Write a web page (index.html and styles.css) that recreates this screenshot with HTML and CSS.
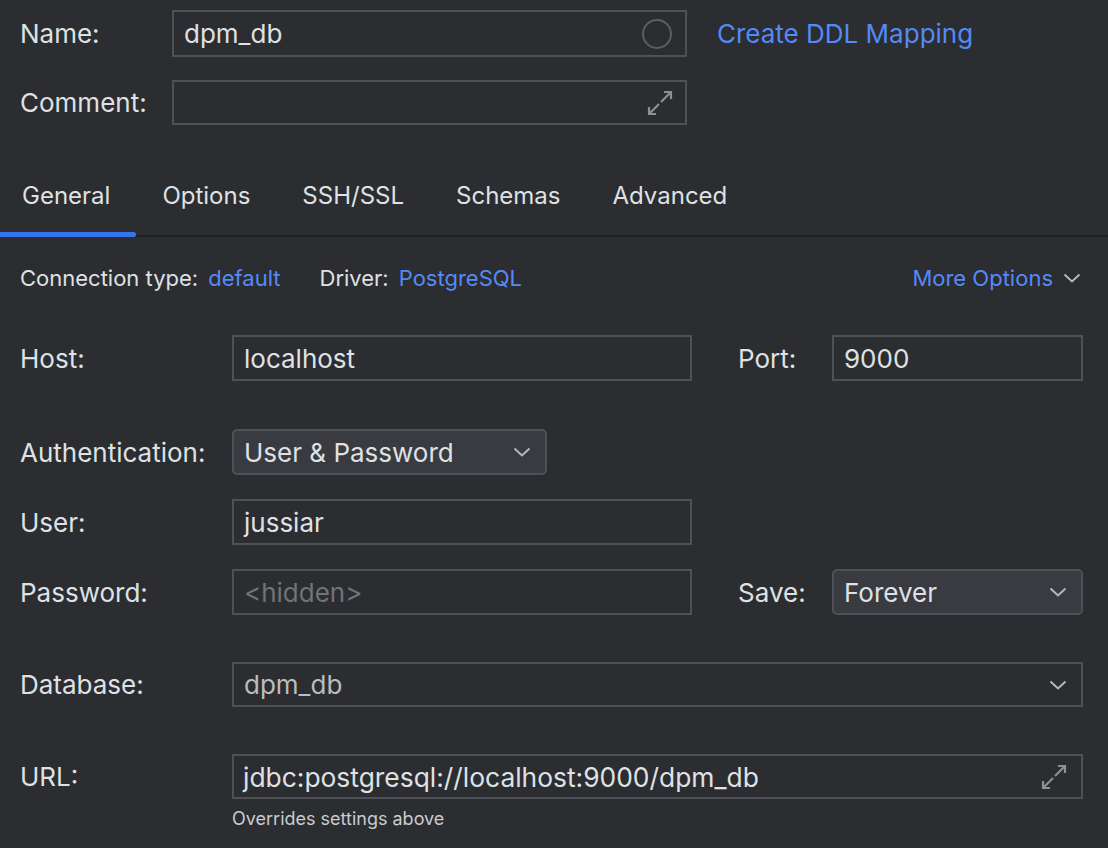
FILE: index.html
```html
<!DOCTYPE html>
<html>
<head>
<meta charset="utf-8">
<link rel="stylesheet" href="styles.css">
</head>
<body>
<div class="page">
  <div class="top">
    <div class="row r-name">
      <span class="lbl lbl-top">Name:</span>
      <div class="field f-name">
        <span class="val">dpm_db</span>
        <svg class="circle" width="32" height="32" viewBox="0 0 32 32"><circle cx="16" cy="16" r="14" fill="none" stroke="#5b5e64" stroke-width="2"/></svg>
      </div>
      <a class="link ddl">Create DDL Mapping</a>
    </div>
    <div class="row r-comment">
      <span class="lbl lbl-top">Comment:</span>
      <div class="field f-name f-comment">
        <svg class="expand" width="26" height="26" viewBox="0 0 26 26"><path d="M14 12 L24 2 M17 2 H24 V9 M12 14 L2 24 M2 17 V24 H9" fill="none" stroke="#8c8f95" stroke-width="2.2"/></svg>
      </div>
    </div>
  </div>

  <div class="tabs">
    <div class="tab active">General</div>
    <div class="tab">Options</div>
    <div class="tab">SSH/SSL</div>
    <div class="tab">Schemas</div>
    <div class="tab">Advanced</div>
  </div>

  <div class="form">
    <div class="conn">
      <span class="ct">Connection type:</span>
      <a class="link sm">default</a>
      <span class="ct drv">Driver:</span>
      <a class="link sm">PostgreSQL</a>
      <span class="spacer"></span>
      <a class="link sm more">More Options</a>
      <svg class="chev-more" width="18" height="10" viewBox="0 0 18 10"><path d="M1.5 1.5 L9 8.5 L16.5 1.5" fill="none" stroke="#b4b8bf" stroke-width="2"/></svg>
    </div>

    <div class="row r-host">
      <span class="lbl">Host:</span>
      <div class="field w-half"><span class="val">localhost</span></div>
      <span class="lbl lbl-side">Port:</span>
      <div class="field w-side"><span class="val">9000</span></div>
    </div>

    <div class="row r-auth">
      <span class="lbl">Authentication:</span>
      <div class="field combo w-auth"><span class="val">User &amp; Password</span>
        <svg class="chev" width="18" height="10" viewBox="0 0 18 10"><path d="M1.5 1.5 L9 8.5 L16.5 1.5" fill="none" stroke="#b4b8bf" stroke-width="2"/></svg>
      </div>
    </div>

    <div class="row r-user">
      <span class="lbl">User:</span>
      <div class="field w-half"><span class="val">jussiar</span></div>
    </div>

    <div class="row r-user">
      <span class="lbl">Password:</span>
      <div class="field w-half"><span class="val ph">&lt;hidden&gt;</span></div>
      <span class="lbl lbl-side">Save:</span>
      <div class="field combo w-side"><span class="val">Forever</span>
        <svg class="chev" width="18" height="10" viewBox="0 0 18 10"><path d="M1.5 1.5 L9 8.5 L16.5 1.5" fill="none" stroke="#b4b8bf" stroke-width="2"/></svg>
      </div>
    </div>

    <div class="row r-db">
      <span class="lbl">Database:</span>
      <div class="field w-full"><span class="val dim">dpm_db</span>
        <svg class="chev" width="18" height="10" viewBox="0 0 18 10"><path d="M1.5 1.5 L9 8.5 L16.5 1.5" fill="none" stroke="#b4b8bf" stroke-width="2"/></svg>
      </div>
    </div>

    <div class="row r-db">
      <span class="lbl">URL:</span>
      <div class="field w-full url"><span class="val">jdbc:postgresql://localhost:9000/dpm_db</span>
        <svg class="expand" width="26" height="26" viewBox="0 0 26 26"><path d="M14 12 L24 2 M17 2 H24 V9 M12 14 L2 24 M2 17 V24 H9" fill="none" stroke="#8c8f95" stroke-width="2.2"/></svg>
      </div>
    </div>
    <div class="hint">Overrides settings above</div>
  </div>
</div>
</body>
</html>
```

FILE: styles.css
```css
* { box-sizing: border-box; }
html, body {
  margin: 0;
  padding: 0;
  background: #2b2d30;
  width: 1108px;
  height: 848px;
  overflow: hidden;
}
body {
  font-family: Inter, "Noto Sans", sans-serif;
  font-size: 26px;
  color: #dfe1e5;
}
.page { width: 1108px; }

.top { padding: 10px 0 0 20px; }
.row {
  display: flex;
  align-items: center;
}
.lbl {
  width: 212px;
  flex: none;
  color: #dfe1e5;
  font-size: 26px;
}
.lbl-top { width: 152px; }
.r-comment { margin-top: 23px; }

.field {
  flex: none;
  height: 46px;
  border: 2px solid #4e5157;
  display: flex;
  align-items: center;
  padding: 0 10px;
  position: relative;
}
.f-name { width: 515px; height: 47px; justify-content: space-between; padding-right: 12px; }
.f-comment { height: 45px; justify-content: flex-end; padding-right: 12px; }
.circle { margin-right: 0; }
.val { color: #dfe1e5; font-size: 26px; white-space: nowrap; }
.val.ph { color: #6f737a; }
.val.dim { color: #b9bcc2; }
.url { padding-left: 9px; }
.url .val { font-size: 26.4px; }

.link { color: #548af7; font-size: 26px; }
.ddl { margin-left: 30px; }

.tabs {
  display: flex;
  margin-top: 31px;
  height: 81px;
  border-bottom: 2px solid #1e1f22;
}
.tab {
  padding: 0 26px;
  height: 79px;
  display: flex;
  align-items: center;
  font-size: 24px;
  color: #dfe1e5;
  position: relative;
}
.tab:first-child { padding-left: 22px; }
.tab.active::after {
  content: "";
  position: absolute;
  left: 0;
  right: 0;
  bottom: -2px;
  height: 5px;
  background: #3574f0;
  border-radius: 0 3px 3px 0;
}

.form { padding: 0 25px 0 20px; }
.conn {
  display: flex;
  align-items: center;
  height: 40px;
  margin-top: 21px;
}
.ct { font-size: 22px; color: #dfe1e5; margin-right: 10px; }
.link.sm { font-size: 22px; }
.drv { margin-left: 39px; }
.spacer { flex: 1; }
.chev-more { margin-left: 10px; margin-right: 2px; }

.r-host { margin-top: 37px; }
.w-half { width: 460px; }
.lbl-side { width: 94px; margin-left: 46px; }
.w-side { width: 251px; }
.r-auth { margin-top: 48px; }
.w-auth { width: 315px; }
.combo {
  background: #393b40;
  border-color: #4e5157;
  border-radius: 5px;
  justify-content: space-between;
  padding-right: 14px;
}
.chev { flex: none; }
.r-user { margin-top: 24px; }
.r-db { margin-top: 47px; }
.r-db .field { height: 45px; }
.w-full { width: 851px; justify-content: space-between; padding-right: 14px; }
.hint {
  margin-left: 212px;
  margin-top: 9px;
  font-size: 18px;
  color: #c9ccd1;
}
```
